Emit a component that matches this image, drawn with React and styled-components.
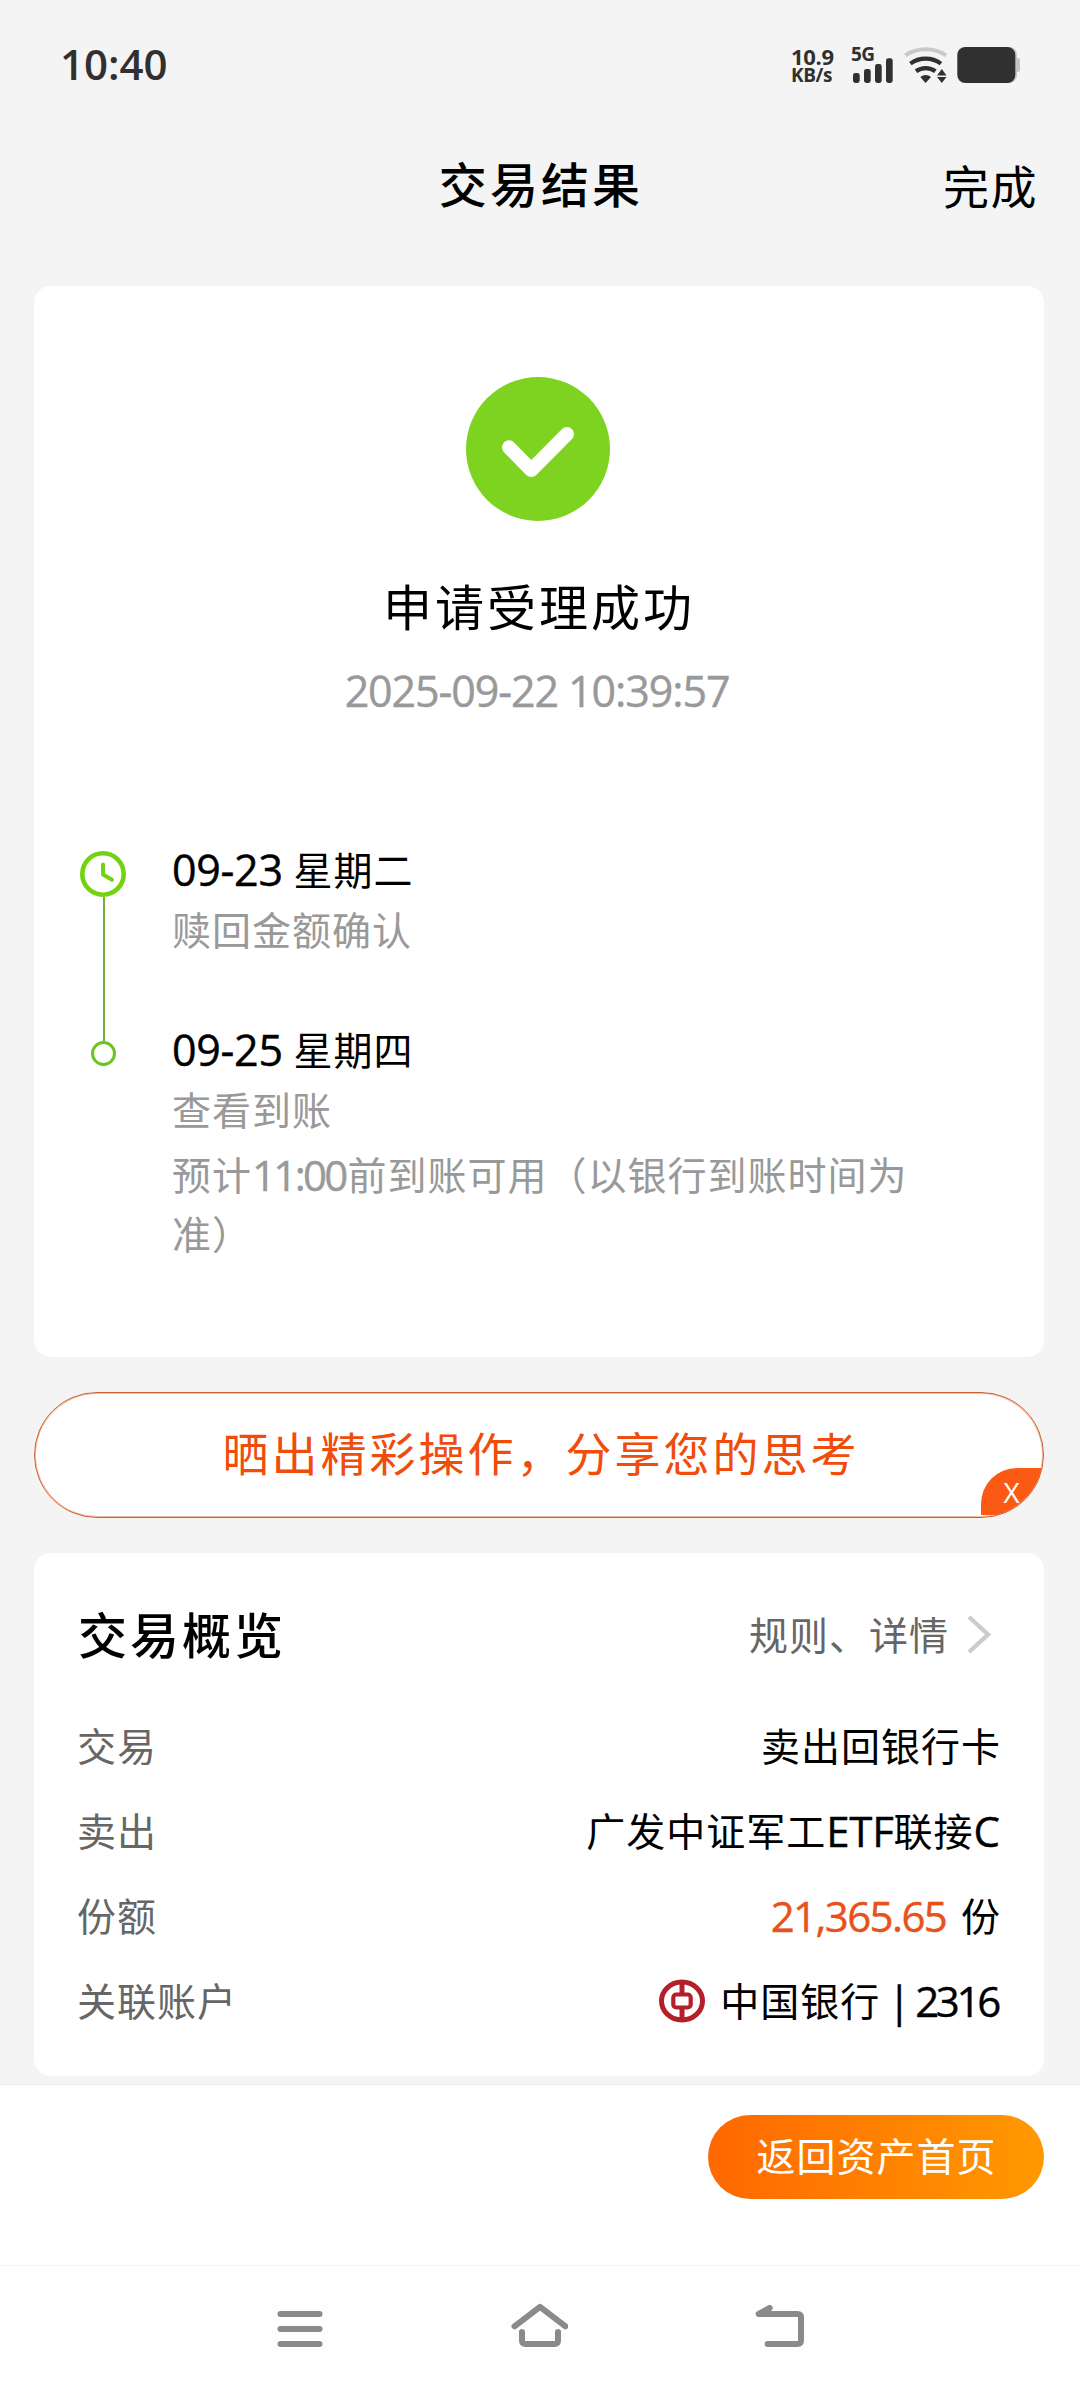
import React from 'react'
import styled, {createGlobalStyle} from 'styled-components'

const GlobalStyle=createGlobalStyle`
  *{
    box-sizing: border-box;
  }
  body{
    margin: 0;
    background: #f4f4f4;
    font-family: "Noto Sans CJK SC", sans-serif;
    color: #000;
  }
  svg{
    display: block;
    flex: none;
  }
`;

const Page=styled.div`
  width: 1080px;
  height: 2392px;
  display: flex;
  flex-direction: column;
  overflow: hidden;
`;

/* status bar */
const StatusBar=styled.div`
  height: 130px;
  padding: 0 60px 0 60px;
  display: flex;
  align-items: center;
  justify-content: space-between;
  color: #303030;
  font-family: "Open Sans", sans-serif;
`;
const Clock=styled.span`
  font-size: 42px;
  font-weight: 600;
  line-height: 50px;
  letter-spacing: 0;
  margin-top: -3px;
`;
const StatusIcons=styled.div`
  display: flex;
  align-items: center;
`;
const Speed=styled.div`
  width: 42px;
  margin-right: 18px;
  font-weight: 700;
  white-space: nowrap;
`;
const SpeedValue=styled.div`
  font-size: 22px;
  line-height: 20px;
  letter-spacing: -.3px;
`;
const SpeedUnit=styled.div`
  font-size: 19px;
  line-height: 19px;
  letter-spacing: -.4px;
`;
const Signal=styled.div`
  width: 42px;
  height: 36px;
  margin-right: 11px;
`;
const Network=styled.div`
  height: 11px;
  font-size: 19px;
  font-weight: 700;
  line-height: 14px;
  letter-spacing: -.6px;
`;

/* title bar */
const Header=styled.header`
  height: 104px;
  margin-bottom: 52px;
  padding: 0 42px 0 44px;
  display: grid;
  grid-template-columns: 1fr auto 1fr;
  align-items: center;
`;
const Title=styled.h1`
  grid-column: 2;
  margin: 0;
  font-size: 48px;
  font-weight: 500;
  line-height: 70px;
  letter-spacing: 3.1px;
`;
const Done=styled.span`
  justify-self: end;
  font-size: 46px;
  line-height: 70px;
  letter-spacing: 1.5px;
  margin-top: 4px;
`;

const Card=styled.section`
  margin: 0 36px ${p=>p.$gap}px 34px;
  height: ${p=>p.$height}px;
  flex: none;
  background: #fff;
  border-radius: 17px;
`;
const Num=styled.span`
  margin: 0 ${p=>p.$after || 0}px 0 ${p=>p.$before || 0}px;
  font-family: "Open Sans", sans-serif;
  font-size: ${p=>p.$size || 42}px;
  line-height: 1;
  letter-spacing: ${p=>p.$spacing || 0}px;
  vertical-align: -1px;
  color: ${p=>p.$color || 'inherit'};
  -webkit-text-stroke: .4px currentColor;
`;

/* result */
const Result=styled.div`
  padding-top: 91px;
  display: flex;
  flex-direction: column;
  align-items: center;
`;
const ResultIcon=styled.svg`
  margin-right: 2px;
`;
const ResultTitle=styled.h2`
  margin: 48px 0 0;
  font-size: 49px;
  font-weight: 400;
  line-height: 72px;
  letter-spacing: 3px;
`;
const ResultTime=styled.div`
  margin: 24px 4px 0 0;
  height: 50px;
  display: flex;
  align-items: center;
  color: #999;
  white-space: pre;
`;

/* timeline */
const Timeline=styled.div`
  margin-top: 125px;
  padding-left: 46px;
  display: flex;
  gap: 46px;
`;
const Rail=styled.div`
  width: 46px;
  padding-top: 11px;
  display: flex;
  flex-direction: column;
  align-items: center;
`;
const RailLine=styled.div`
  width: 2px;
  height: 144px;
  margin-left: 1px;
  background: #74b236;
`;
const RailDot=styled.div`
  width: 25px;
  height: 25px;
  margin-left: 1px;
  border: 3px solid #6cc41e;
  border-radius: 50%;
`;
const Steps=styled.div`
  width: 750px;
  font-size: 39px;
  letter-spacing: 1px;
`;
const Step=styled.div`
  min-height: 180px;
`;
const StepDate=styled.div`
  height: 56px;
  line-height: 56px;
  margin-bottom: 2px;
  white-space: pre;
`;
const StepText=styled.div`
  line-height: 60px;
  color: #999;
`;
const StepNote=styled.div`
  margin-top: 6px;
  line-height: 59px;
  color: #999;
`;

/* share banner */
const Share=styled.div`
  position: relative;
  flex: none;
  height: 126px;
  margin: 0 36px 35px 34px;
  padding: 0 0 8px 4px;
  display: flex;
  align-items: center;
  justify-content: center;
  border: 1px solid #cb5f30;
  border-radius: 63px;
  background: #fff;
  box-shadow: inset 0 0 0 1px #f4bfa2;
  overflow: hidden;
  color: #f04c0c;
  font-size: 46px;
  letter-spacing: 3px;
`;
const ShareClose=styled.span`
  position: absolute;
  right: -1px;
  bottom: 2px;
  width: 63px;
  height: 47px;
  padding: 0 2px 0 0;
  display: flex;
  align-items: center;
  justify-content: center;
  border-top-left-radius: 36px;
  background: #fb5a14;
  color: #fff;
  font-family: "Open Sans", sans-serif;
  font-size: 28px;
  letter-spacing: 0;
`;

/* overview */
const OverviewHead=styled.div`
  height: 148px;
  padding: 11px 53px 0 44px;
  display: flex;
  align-items: center;
  justify-content: space-between;
`;
const OverviewTitle=styled.h2`
  margin: 0;
  font-size: 49px;
  font-weight: 500;
  line-height: 70px;
  letter-spacing: 3px;
`;
const DetailLink=styled.span`
  display: flex;
  align-items: center;
  gap: 18px;
  font-size: 39px;
  line-height: 56px;
  letter-spacing: 1px;
  color: #666;
`;
const Row=styled.div`
  height: 85px;
  padding: 0 43px 0 43px;
  display: flex;
  align-items: center;
  justify-content: space-between;
  font-size: 39px;
  line-height: 56px;
  letter-spacing: 1px;
`;
const Label=styled.span`
  color: #666;
`;
const Value=styled.span`
  display: flex;
  align-items: center;
  white-space: pre;
`;
const Line=styled.span`
  height: 56px;
`;

/* bottom */
const Footer=styled.div`
  flex: none;
  height: 181px;
  padding: 30px 36px 0 0;
  display: flex;
  justify-content: flex-end;
  border-top: 1px solid #ebebeb;
  background: #fff;
`;
const HomeButton=styled.button`
  width: 336px;
  height: 84px;
  padding: 0 0 6px 1px;
  border: 0;
  border-radius: 42px;
  background: linear-gradient(90deg, #ff6800, #ff9900);
  color: #fff;
  font-family: inherit;
  font-size: 39px;
  letter-spacing: 1px;
`;
const NavBar=styled.nav`
  flex: 1;
  padding: 36px 276px 0 276px;
  display: flex;
  justify-content: space-between;
  border-top: 1px solid #f1f1f1;
  background: #fefefe;
`;

const rows=[
  {label:'交易',value:<Line>卖出回银行卡</Line>},
  {label:'卖出',value:<Line>广发中证军工<Num $spacing={-.3}>ETF</Num>联接<Num $after={1}>C</Num></Line>},
  {label:'份额',value:<Line><Num $spacing={-1.6} $after={5} $color="#e8521a">21,365.65</Num> 份</Line>},
  {label:'关联账户',value:<><BankLogo/><Line>中国银行<Num $spacing={-3.3} $after={3}> | 2316</Num></Line></>},
]

function BankLogo() {
  return (
    <svg width="61" height="48" viewBox="0 0 61 48" fill="none" stroke="#b41f29">
      <ellipse cx="23" cy="26" rx="20.5" ry="19" strokeWidth="5"/>
      <rect x="14.3" y="19.5" width="17.4" height="13" rx="3" strokeWidth="4.2"/>
      <path d="M23 6v13M23 33v13" strokeWidth="5"/>
    </svg>
  )
}

export default function App() {
  return (
    <Page>
      <GlobalStyle/>

      <StatusBar>
        <Clock>10:40</Clock>
        <StatusIcons>
          <Speed>
            <SpeedValue>10.9</SpeedValue>
            <SpeedUnit>KB/s</SpeedUnit>
          </Speed>
          <Signal>
            <Network>5G</Network>
            <svg width="42" height="25" viewBox="0 0 42 25" fill="#303030">
              <rect x="2" y="15" width="6.7" height="10" rx="2.4"/>
              <rect x="13" y="11" width="6.7" height="14" rx="2.4"/>
              <rect x="24" y="6" width="6.7" height="19" rx="2.4"/>
              <rect x="35" y="0.3" width="6.7" height="24.7" rx="2.4"/>
            </svg>
          </Signal>
          <svg width="53" height="36" viewBox="0 0 53 36" fill="none" strokeWidth="4.2">
            <path d="M1.3 8.4C13 .2 30.4 .2 42 8.4" stroke="#c9c9c9"/>
            <path d="M6.4 16.6C15.5 9.9 27.8 9.9 36.9 16.6" stroke="#303030"/>
            <path d="M12 24.2C17.8 20 25.6 20 31.4 24.2" stroke="#303030"/>
            <path d="M16.3 30C19.5 27.2 23.8 27.2 27 30L21.6 36Z" fill="#303030"/>
            <path d="M37.8 22L42.5 28.5H33Z M33 30H42.5L37.8 36Z" fill="#303030"/>
          </svg>
          <svg width="63" height="36" viewBox="0 0 63 36">
            <rect x="3" y="0" width="57" height="36" rx="8" fill="#c4c4c4"/>
            <path d="M59 11h1.5a2.5 2.5 0 0 1 2.5 2.5v9a2.5 2.5 0 0 1-2.5 2.5H59z" fill="#c4c4c4"/>
            <rect x="0.3" y="0" width="58" height="36" rx="8" fill="#303030"/>
          </svg>
        </StatusIcons>
      </StatusBar>

      <Header>
        <Title>交易结果</Title>
        <Done>完成</Done>
      </Header>

      <Card $height={1071} $gap={35}>
        <Result>
          <ResultIcon width="144" height="144" viewBox="0 0 144 144" fill="none">
            <circle cx="72" cy="72" r="72" fill="#7ed321"/>
            <path d="M43 70.3L65.3 93L101 57" stroke="#fff" strokeWidth="14" strokeLinecap="round" strokeLinejoin="round"/>
          </ResultIcon>
          <ResultTitle>申请受理成功</ResultTitle>
          <ResultTime><Num $size={43} $spacing={-1.1}>2025-09-22 10:39:57</Num></ResultTime>
        </Result>

        <Timeline>
          <Rail>
            <svg width="46" height="46" viewBox="0 0 46 46" fill="none" stroke="#74d30f" strokeLinecap="round" strokeLinejoin="round">
              <circle cx="23" cy="23" r="20.7" strokeWidth="4.6"/>
              <path d="M23 13.5V23.5L32 28.7" strokeWidth="4"/>
            </svg>
            <RailLine/>
            <RailDot/>
          </Rail>
          <Steps>
            <Step>
              <StepDate><Num $size={43} $spacing={-.3} $after={1}>09-23</Num> 星期二</StepDate>
              <StepText>赎回金额确认</StepText>
            </Step>
            <Step>
              <StepDate><Num $size={43} $spacing={-.3} $after={1}>09-25</Num> 星期四</StepDate>
              <StepText>查看到账</StepText>
              <StepNote>预计<Num $spacing={-2.7} $after={2}>11:00</Num>前到账可用（以银行到账时间为准）</StepNote>
            </Step>
          </Steps>
        </Timeline>
      </Card>

      <Share>
        晒出精彩操作，分享您的思考
        <ShareClose>X</ShareClose>
      </Share>

      <Card $height={523} $gap={8}>
        <OverviewHead>
          <OverviewTitle>交易概览</OverviewTitle>
          <DetailLink>
            规则、详情
            <svg width="24" height="42" viewBox="0 0 24 42" fill="none">
              <path d="M2 5L21 22.5L2 40" stroke="#ccc" strokeWidth="4.4"/>
            </svg>
          </DetailLink>
        </OverviewHead>
        {rows.map(row=>(
          <Row key={row.label}>
            <Label>{row.label}</Label>
            <Value>{row.value}</Value>
          </Row>
        ))}
      </Card>

      <Footer>
        <HomeButton>返回资产首页</HomeButton>
      </Footer>

      <NavBar>
        <svg width="48" height="50" viewBox="0 0 48 50" stroke="#8a8a8a" strokeWidth="6" strokeLinecap="round">
          <path d="M4.5 12H43.5M4.5 27H43.5M4.5 42H43.5"/>
        </svg>
        <svg width="58" height="50" viewBox="0 0 58 50" fill="none" stroke="#8a8a8a" strokeWidth="6" strokeLinecap="round" strokeLinejoin="round">
          <path d="M4.5 24.3L30 4.8L55.5 24.3"/>
          <path d="M12 30V38.5Q12 42 15.5 42H44.5Q48 42 48 38.5V30"/>
        </svg>
        <svg width="50" height="50" viewBox="0 0 50 50" fill="none" stroke="#8a8a8a" strokeWidth="6" strokeLinecap="round" strokeLinejoin="round">
          <path d="M15.7 6L4.7 12H43.5Q47 12 47 15.5V38.5Q47 42 43.5 42H13.7"/>
        </svg>
      </NavBar>
    </Page>
  )
}
